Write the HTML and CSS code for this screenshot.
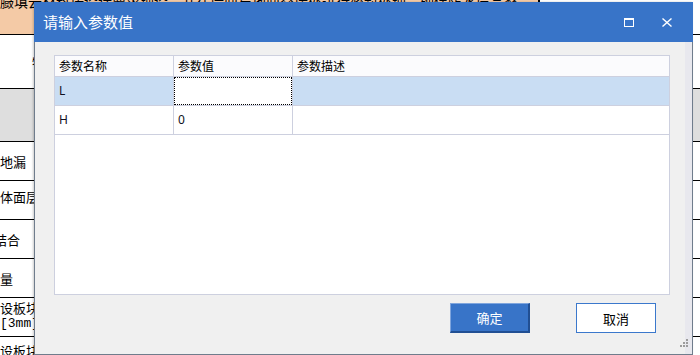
FILE: index.html
```html
<!DOCTYPE html>
<html lang="zh-CN">
<head>
  <meta charset="UTF-8"/>
  <meta name="viewport" content="width=device-width, initial-scale=1.0"/>
  <title>请输入参数值</title>
  <link rel="stylesheet" href="styles.css">
</head>
<body>
  <!-- page behind the dialog -->
  <div class="page">
    <div class="page-top">
      <div class="page-top-cell">
        <span class="page-top-text">臌填云材料按设计要求铺设，并在墙面与地面交接处进行密封处理，确保防水层完整</span>
      </div>
    </div>
    <div class="page-band"><span class="band-text">特征</span></div>
    <div class="page-gray"></div>
    <div class="list">
      <div class="list-row">地漏</div>
      <div class="list-row top">体面层</div>
      <div class="list-row"><span class="cut">结</span>合</div>
      <div class="list-row">量</div>
      <div class="list-row two">设板块<br><span class="mono">[3mm]</span></div>
      <div class="list-row last">设板块</div>
    </div>
  </div>

  <div class="dialog">
    <div class="titlebar">
      <span class="title">请输入参数值</span>
      <span class="tb-btn">
        <svg width="10" height="9" viewBox="0 0 10 9"><rect x="0.5" y="0.5" width="9" height="8" fill="none" stroke="#fff"/><line x1="0" y1="1.5" x2="10" y2="1.5" stroke="#fff"/></svg>
      </span>
      <span class="tb-btn">
        <svg width="10" height="9" viewBox="0 0 10 9"><path d="M0.5 0.5 L9.5 8.5 M9.5 0.5 L0.5 8.5" stroke="#fff" stroke-width="1.4"/></svg>
      </span>
    </div>
    <div class="dialog-body">
      <div class="grid">
        <div class="grid-rows">
          <div class="cell head">参数名称</div>
          <div class="cell head">参数值</div>
          <div class="cell head">参数描述</div>

          <div class="cell sel">L</div>
          <div class="cell focus"></div>
          <div class="cell sel"></div>

          <div class="cell">H</div>
          <div class="cell">0</div>
          <div class="cell"></div>
        </div>
      </div>
      <div class="actions">
        <button class="btn primary">确定</button>
        <button class="btn">取消</button>
      </div>
      <svg class="grip" width="11" height="9" viewBox="0 0 11 9">
        <rect x="9" y="0" width="2" height="2" fill="#9c9c9c"/>
        <rect x="6" y="3" width="2" height="2" fill="#9c9c9c"/>
        <rect x="9" y="3" width="2" height="2" fill="#9c9c9c"/>
        <rect x="3" y="6" width="2" height="2" fill="#9c9c9c"/>
        <rect x="6" y="6" width="2" height="2" fill="#9c9c9c"/>
        <rect x="9" y="6" width="2" height="2" fill="#9c9c9c"/>
      </svg>
    </div>
  </div>
</body>
</html>
```

FILE: styles.css
```css
/* Base */
body {
  margin:0; width:700px; height:355px;
  overflow:hidden; position:relative;
  background:#fff;
  font-family:"Noto Sans CJK SC","Noto Sans",sans-serif;
  color:#000;
}

/* Page behind */
.page { width:700px; height:355px; overflow:hidden; }
.page-top { height:34px; border-bottom:1px solid #000; display:flex; }
.page-top-cell {
  width:538px; background:#f4caa6;
  border-right:2px solid #000; overflow:hidden;
}
.page-top-text {
  display:block; margin-top:-6px;
  font-size:14px; line-height:14px; white-space:nowrap;
}
.page-band {
  height:53px; border-bottom:1px solid #000;
  display:flex; align-items:center;
}
.band-text { padding-left:32px; font-size:13px; line-height:15px; }
.page-gray { height:52px; background:#dedede; border-bottom:1px solid #000; }

.list-row {
  height:38px; border-bottom:1px solid #000;
  display:flex; align-items:center;
  font-size:13px; line-height:15px; white-space:nowrap; overflow:hidden;
}
.list-row.top { align-items:flex-start; padding-top:8px; height:30px; }
.list-row.two { display:block; padding-top:3px; height:35px; line-height:14px; }
.list-row.last { align-items:flex-start; padding-top:6px; height:32px; }
.cut { margin-left:-6px; }
.mono { font-family:"Liberation Mono",monospace; font-size:13px; }

/* Dialog */
.dialog {
  position:absolute; left:34px; top:2px;
  width:659px; height:353px;
  display:flex; flex-direction:column;
  box-shadow:-1px 0 2px rgba(0,0,0,0.2);
}
.titlebar {
  height:40px; flex-shrink:0;
  background:#3874c8; color:#fff;
  display:flex; align-items:center;
  padding:0 7px 0 9px;
}
.title { flex:1; font-size:15px; line-height:18px; }
.tb-btn { width:38px; height:40px; display:flex; align-items:center; justify-content:center; }
.tb-btn svg { display:block; }

.dialog-body {
  flex:1; position:relative;
  box-sizing:border-box;
  background:linear-gradient(to left,#e8e8ee 7px,#f0f0f0 7px);
  border:1px solid #6f7c8c; border-top:none;
  padding:13px 22px 0 19px;
  display:flex; flex-direction:column;
}

/* Grid */
.grid {
  height:240px; box-sizing:border-box;
  border:1px solid #cdd0df; background:#fff;
}
.grid-rows {
  display:grid;
  grid-template-columns:118px 118px 1fr;
  grid-template-rows:20px 28px 28px;
  gap:1px;
  background:#cdd0df;
  border-bottom:1px solid #cdd0df;
}
.cell {
  background:#fff;
  padding-left:4px;
  display:flex; align-items:center;
  font-family:"Noto Sans","Noto Sans CJK SC",sans-serif;
  font-size:12px; line-height:14px; color:#101020;
}
.cell.head {
  background:#fbfbfd; color:#000;
  font-family:"Noto Sans CJK SC",sans-serif;
}
.cell.sel { background:#c9ddf3; }
.cell.focus { outline:1px dotted #000; outline-offset:-1px; }

/* Buttons */
.actions {
  display:flex; justify-content:flex-end; gap:46px;
  margin-top:8px; padding-right:14px;
}
.btn {
  width:80px; height:30px; box-sizing:border-box;
  font-family:"Noto Sans CJK SC",sans-serif; font-size:13px;
  background:#fff; color:#000;
  border:1px solid #3b78cc;
  padding:0; cursor:pointer;
}
.btn.primary {
  background:#3874c8; color:#fff;
  border-width:1px 2px 2px 1px;
  border-color:#7fa5dd #214f93 #214f93 #7fa5dd;
}

.grip { position:absolute; right:4px; bottom:6px; }
```
